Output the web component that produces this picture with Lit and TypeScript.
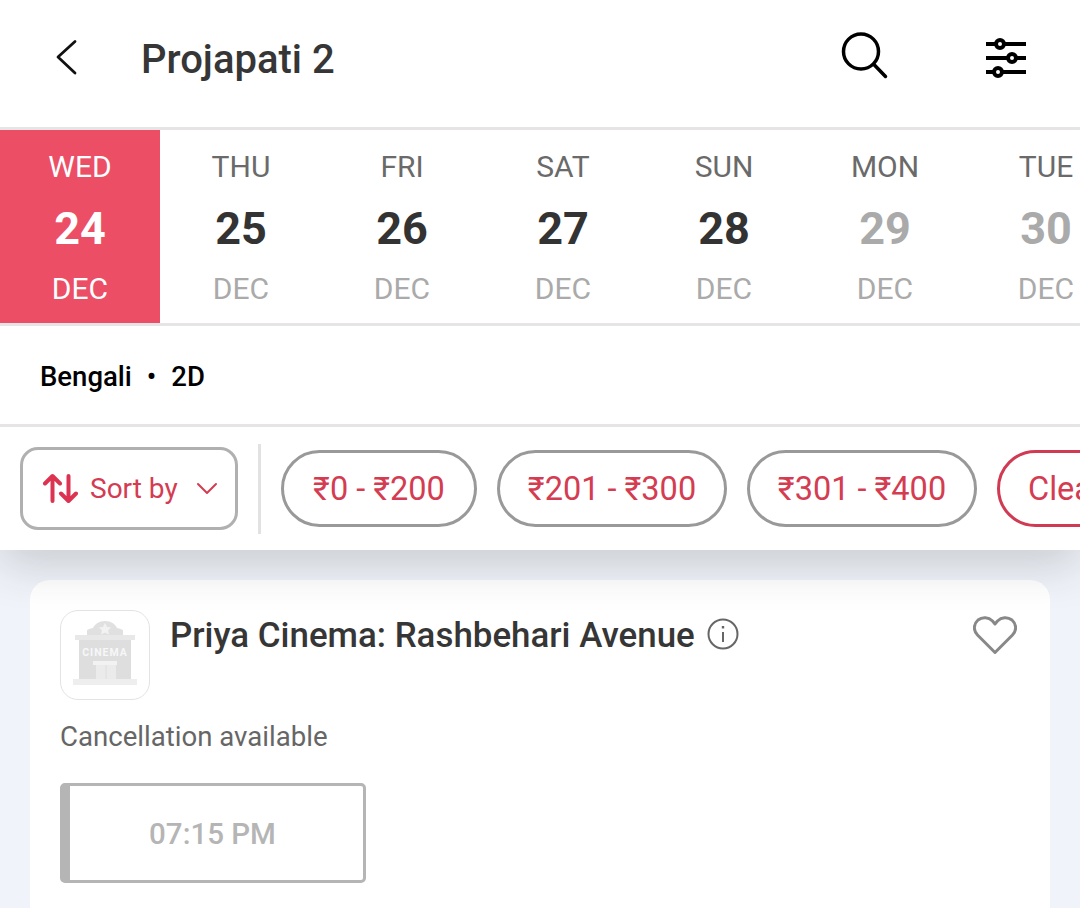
import { LitElement, html, css } from "lit";
import { customElement } from "lit/decorators.js";

const days = [
  { d: "WED", n: "24", on: true },
  { d: "THU", n: "25" },
  { d: "FRI", n: "26" },
  { d: "SAT", n: "27" },
  { d: "SUN", n: "28" },
  { d: "MON", n: "29", off: true },
  { d: "TUE", n: "30", off: true },
];
const prices = [
  { t: "₹0 - ₹200", w: 196 },
  { t: "₹201 - ₹300", w: 230 },
  { t: "₹301 - ₹400", w: 230 },
];

@customElement("app-root")
export class AppRoot extends LitElement {
  static styles = css`
    :host { display: block; height: 908px; overflow: hidden; background: #f0f3f9; font-family: Roboto, sans-serif; }
    .top { background: #fff; box-shadow: 0 14px 44px rgba(40,45,50,.2); position: relative; }
    .header { box-sizing: content-box; height: 115px; display: flex; align-items: center; padding: 0 0 12px 51px; border-bottom: 3px solid #e6e4e5; }
    .back { width: 32px; height: 40px; flex: none; }
    .title { margin: 4px 0 0 58px; font-size: 40px; font-weight: 500; color: #363636; flex: 1; }
    .search { width: 52px; height: 52px; margin-right: 93px; flex: none; }
    .tune { width: 46px; height: 46px; margin-right: 51px; flex: none; }
    .dates { height: 193px; display: flex; border-bottom: 3px solid #e6e4e5; overflow: hidden; }
    .day { flex: none; box-sizing: border-box; width: 161px; padding-left: 1px; display: flex; flex-direction: column; align-items: center; color: #6a6a6a; }
    .day.on { width: 160px; padding-left: 0; background: #ec4e66; color: #fff; }
    .dow { font-size: 30px; line-height: 32px; margin-top: 21px; }
    .num { font-size: 45px; line-height: 50px; font-weight: 700; margin-top: 21px; color: #333; }
    .mon { font-size: 30px; line-height: 32px; margin-top: 19px; color: #aaa; }
    .on .num, .on .mon { color: #fff; }
    .off .num { color: #aaa; }
    .lang { box-sizing: border-box; height: 101px; display: flex; align-items: center; padding: 3px 0 0 40px; border-bottom: 3px solid #e6e4e5; font-size: 27.5px; font-weight: 500; color: #000; }
    .dot { margin: 0 15px; font-size: 27px; }
    .filters { height: 123px; display: flex; align-items: center; padding-left: 20px; overflow: hidden; }
    .sort { flex: none; box-sizing: border-box; width: 218px; height: 83px; margin-top: -1px; border: 3px solid #b0b0b0; border-radius: 18px; display: flex; align-items: center; padding-left: 19px; color: #d43c52; font-size: 28px; }
    .sort .arrows { width: 36px; height: 36px; margin-right: 12px; flex: none; }
    .sort .chev { width: 24px; height: 14px; margin-left: 17px; flex: none; }
    .divider { flex: none; width: 3px; height: 90px; background: #e2e2e2; margin: 1px 20px 0 20px; }
    .pill { flex: none; box-sizing: border-box; height: 77px; border: 3px solid #999; border-radius: 39px; display: flex; align-items: center; justify-content: center; font-size: 32.5px; color: #d43c52; margin-right: 20px; white-space: nowrap; }
    .pill.clear { border-color: #d03a52; padding: 0 28px; }
    .card { margin: 30px 30px 0; background: #fff; border-radius: 20px; padding: 30px; height: 400px; box-sizing: border-box; }
    .row { display: flex; align-items: flex-start; }
    .logo { flex: none; box-sizing: border-box; width: 90px; height: 90px; border: 1px solid #e3e3e3; border-radius: 18px; }
    .name { margin: 1px 0 0 20px; font-size: 34.9px; line-height: 50px; font-weight: 500; color: #363636; white-space: nowrap; }
    .info { width: 32px; height: 32px; margin: 8px 0 0 12px; flex: none; }
    .heart { width: 44px; height: 42px; margin: 4px 3px 0 auto; flex: none; }
    .cancel { margin-top: 20px; font-size: 27.6px; line-height: 34px; color: #666; }
    .time { box-sizing: border-box; margin-top: 29px; width: 306px; height: 100px; padding: 1px 8px 0 0; border: 3px solid #b5b5b5; border-left-width: 10px; border-radius: 5px; display: flex; align-items: center; justify-content: center; font-size: 29.5px; font-weight: 500; color: #b5b5b5; }
  `;

  render() {
    return html`
      <div class="top">
        <div class="header">
          <svg class="back" viewBox="0 0 32 40" fill="none" stroke="#111" stroke-width="2.800" stroke-linecap="round" stroke-linejoin="round"><path d="M24 3.500 7 19 24 35"/></svg>
          <div class="title">Projapati 2</div>
          <svg class="search" viewBox="0 0 52 52" fill="none" stroke="#000" stroke-width="3.500" stroke-linecap="round"><circle cx="23" cy="19.500" r="17.500"/><path d="M35.700 32.200 47.500 44.500"/></svg>
          <svg class="tune" viewBox="0 0 46 46" fill="none" stroke="#000" stroke-width="4"><path d="M3 9h40M3 23h40M3 37h40"/><g fill="#fff" stroke-width="4"><circle cx="17" cy="9" r="4"/><circle cx="29" cy="23" r="4"/><circle cx="15" cy="37" r="4"/></g></svg>
        </div>
        <div class="dates">
          ${days.map(
            (x) => html`<div class="day ${x.on ? "on" : ""} ${x.off ? "off" : ""}">
              <div class="dow">${x.d}</div>
              <div class="num">${x.n}</div>
              <div class="mon">DEC</div>
            </div>`
          )}
        </div>
        <div class="lang">Bengali<span class="dot">•</span>2D</div>
        <div class="filters">
          <div class="sort">
            <svg class="arrows" viewBox="0 0 36 36" fill="none" stroke="#dc3450" stroke-width="4" stroke-linecap="round" stroke-linejoin="round"><path d="M10.500 31V6M3 13.500l7.500-7.500 7.500 7.500M26.500 6v25M19 23.500l7.500 7.500 7.500-7.500"/></svg>
            Sort by
            <svg class="chev" viewBox="0 0 24 14" fill="none" stroke="#d43c52" stroke-width="2" stroke-linecap="round" stroke-linejoin="round"><path d="M3 3l9 9 9-9"/></svg>
          </div>
          <div class="divider"></div>
          ${prices.map((p) => html`<div class="pill" style="width:${p.w}px">${p.t}</div>`)}
          <div class="pill clear">Clear</div>
        </div>
      </div>
      <div class="card">
        <div class="row">
          <div class="logo">
            <svg viewBox="0 0 88 88" width="88" height="88">
              <path d="M26 24v-5c2-1 4-1.500 6-2 2-4 6-7 12-7s10 3 12 7c2 .500 4 1 6 2v5z" fill="#e0e0e0"/>
              <rect x="14" y="24" width="60" height="5" fill="#e8e8e8"/>
              <rect x="18" y="29" width="52" height="39" fill="#dedede"/>
              <rect x="12" y="68" width="64" height="6" fill="#eeeeee"/>
              <path d="M44 12l2 4 4 .500-3 3 1 4-4-2-4 2 1-4-3-3 4-.500z" fill="#f2f2f2"/>
              <text x="44" y="45" text-anchor="middle" font-family="Roboto, sans-serif" font-size="10.500" font-weight="700" letter-spacing="1" fill="#f7f7f7">CINEMA</text>
              <rect x="32" y="50" width="24" height="4" fill="#f2f2f2"/>
              <rect x="35" y="54" width="20" height="14" fill="#ebebeb"/>
              <path d="M45 54v14" stroke="#dedede"/>
            </svg>
          </div>
          <div class="name">Priya Cinema: Rashbehari Avenue</div>
          <svg class="info" viewBox="0 0 32 32" fill="none" stroke="#666" stroke-width="2"><circle cx="16" cy="16" r="14.500"/><path d="M16 14v10"/><path d="M16 8v2.500" stroke-width="2.400"/></svg>
          <svg class="heart" viewBox="0 0 44 42" fill="none" stroke="#888" stroke-width="3" stroke-linejoin="round"><path d="M22 38.500 4.500 21C0 16.500 .500 10 5 6c4.500-3.500 10.500-3 14.500 1L22 10l2.500-3c4-4 10-4.500 14.500-1 4.500 4 5 10.500 .500 15z"/></svg>
        </div>
        <div class="cancel">Cancellation available</div>
        <div class="time">07:15 PM</div>
      </div>
    `;
  }
}
